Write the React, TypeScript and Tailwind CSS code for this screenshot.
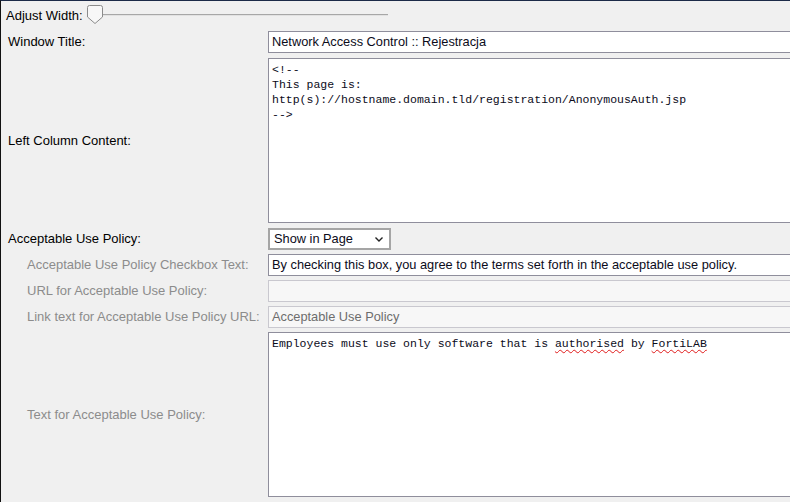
import React from 'react';

const labelFont = "font-['Liberation_Sans',Arial,sans-serif] text-[13px]";
const fieldFont = "font-['Liberation_Sans',Arial,sans-serif] text-[12.8px]";
const monoFont = "font-['Liberation_Mono','DejaVu_Sans_Mono',monospace] text-[11.5px] leading-[15px]";

const Row = ({ label, sub, className, children }: { label: string; sub?: boolean; className?: string; children: React.ReactNode }) => (
    <div className={`flex flex-row items-center w-full ${className ?? ''}`}>
        <div
            className={`w-[267px] shrink-0 ${labelFont} ${sub ? 'pl-[26px] text-[#8c8c8c]' : 'pl-[7px] text-black'}`}
        >
            {label}
        </div>
        {children}
    </div>
);

const Slider = () => (
    <svg width="302" height="22" viewBox="0 0 302 22" className="block">
        {/* track */}
        <line x1="10" y1="10.5" x2="302" y2="10.5" stroke="#a7a7a7" strokeWidth="1" />
        <line x1="10" y1="11.5" x2="302" y2="11.5" stroke="#e2e2e2" strokeWidth="1" />
        {/* thumb */}
        <path
            d="M1.5 3.5 Q1.5 1.5 3.5 1.5 H14.5 Q16.5 1.5 16.5 3.5 V13 L9 19.5 L1.5 13 Z"
            fill="#f7f7f7"
            stroke="#8b8b8b"
            strokeWidth="1"
        />
    </svg>
);

export default function App() {
    return (
        <div className="w-[790px] h-[502px] overflow-hidden bg-[#f0f0f0] border-t border-l border-t-[#1c2a48] border-l-[#111]">
            {/* Adjust Width */}
            <div className="flex flex-row items-center h-[28px] pl-[5px] pt-[1px]">
                <span className={`${labelFont} text-black`}>Adjust Width:</span>
                <div className="ml-[3px] -mt-[1px]">
                    <Slider />
                </div>
            </div>

            <div className="flex flex-col gap-[4px] w-[1100px] pt-[2px]">
                <Row label="Window Title:">
                    <div className={`flex items-center w-[600px] h-[22px] px-[3px] bg-white border border-[#8f8e9c] ${fieldFont} text-[#0b0b1a]`}>
                        Network Access Control :: Rejestracja
                    </div>
                </Row>

                <Row label="Left Column Content:" className="mt-[1px]">
                    <div className={`w-[600px] h-[165px] px-[3px] pt-[3px] bg-white border border-[#8f8e9c] whitespace-pre ${monoFont} text-[#0b0b1a]`}>
                        {'<!--\nThis page is:\nhttp(s)://hostname.domain.tld/registration/AnonymousAuth.jsp\n-->'}
                    </div>
                </Row>

                <Row label="Acceptable Use Policy:" className="mt-[1px]">
                    <div className={`flex items-center justify-between w-[123px] h-[22px] pl-[4px] pr-[5px] bg-white border-2 border-[#a5a5a5] ${fieldFont} text-[#0b0b1a]`}>
                        <span>Show in Page</span>
                        <svg width="10" height="7" viewBox="0 0 10 7">
                            <path d="M1.5 1.5 L5 5 L8.5 1.5" fill="none" stroke="#222" strokeWidth="1.4" />
                        </svg>
                    </div>
                </Row>

                <Row label="Acceptable Use Policy Checkbox Text:" sub>
                    <div className={`flex items-center w-[600px] h-[22px] px-[3px] bg-white border border-[#8f8e9c] ${fieldFont} text-[#0b0b1a]`}>
                        By checking this box, you agree to the terms set forth in the acceptable use policy.
                    </div>
                </Row>

                <Row label="URL for Acceptable Use Policy:" sub>
                    <div className="w-[600px] h-[22px] bg-[#f7f7f7] border border-[#c9c8cf]" />
                </Row>

                <Row label="Link text for Acceptable Use Policy URL:" sub>
                    <div className={`flex items-center w-[600px] h-[22px] px-[3px] bg-[#f7f7f7] border border-[#c9c8cf] ${fieldFont} text-[#6d6d6d]`}>
                        Acceptable Use Policy
                    </div>
                </Row>

                <Row label="Text for Acceptable Use Policy:" sub>
                    <div className={`w-[600px] h-[165px] px-[3px] pt-[3px] bg-white border border-[#8f8e9c] whitespace-pre ${monoFont} text-[#0b0b1a]`}>
                        Employees must use only software that is{' '}
                        <span className="underline decoration-wavy decoration-[#e01b1b] decoration-1 underline-offset-2">authorised</span>
                        {' '}by{' '}
                        <span className="underline decoration-wavy decoration-[#e01b1b] decoration-1 underline-offset-2">FortiLAB</span>
                    </div>
                </Row>
            </div>
        </div>
    );
}
